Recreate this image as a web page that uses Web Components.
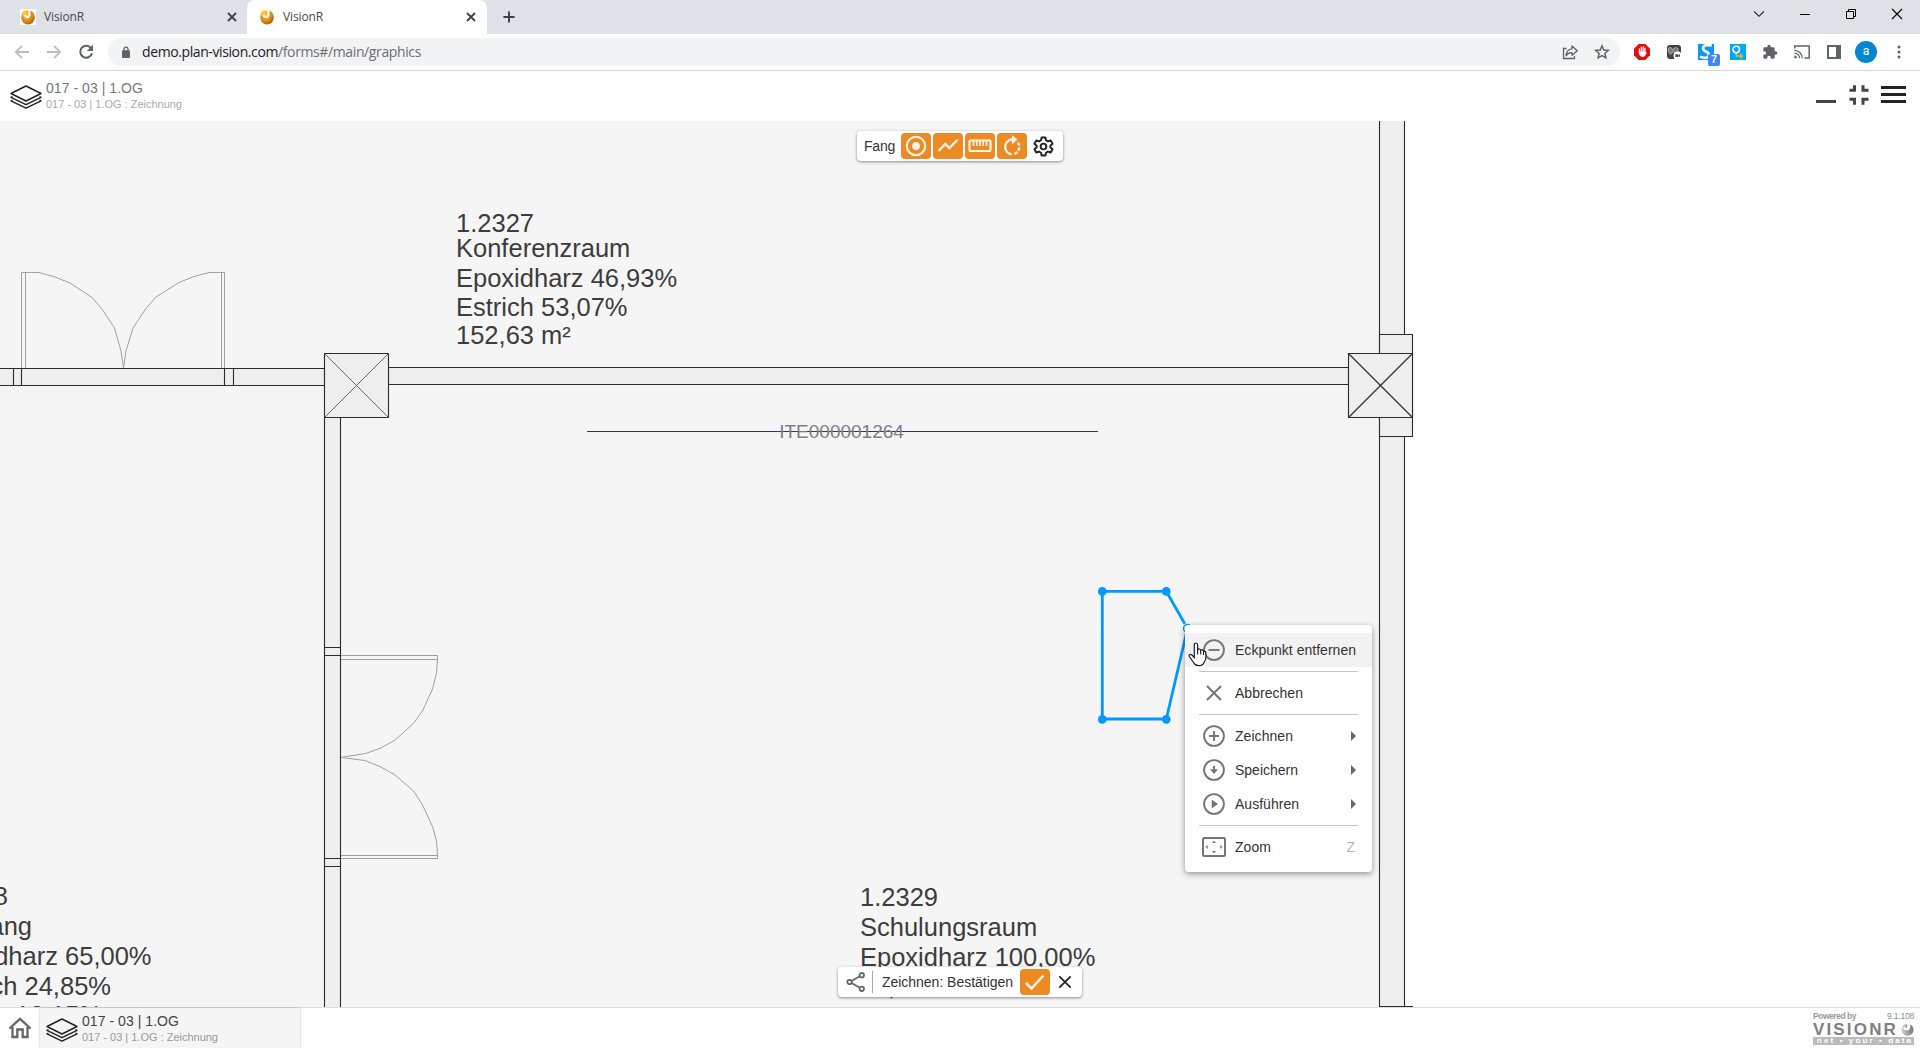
<!DOCTYPE html>
<html lang="de">
<head>
<meta charset="utf-8">
<title>VisionR</title>
<style>
html,body{margin:0;height:100%;overflow:hidden;background:#fff}
body{font-family:"Liberation Sans",Arial,sans-serif;font-size:14px}
</style>
</head>
<body>
<vr-window></vr-window>
<script>
const define = (name, html, init) => customElements.define(name, class extends HTMLElement {
  constructor() {
    super();
    this.attachShadow({ mode: 'open' }).innerHTML = html;
  }
  connectedCallback() { if (init) init.call(this, this.shadowRoot); }
});

/* A run of text spaced out to a fixed advance width. */
define('fit-text', '<style>:host{display:inline-block;white-space:nowrap;line-height:1;flex:none}</style><slot></slot>', function () {
  const want = +this.getAttribute('w'), n = this.textContent.length;
  this.style.letterSpacing = '0px';
  const have = this.getBoundingClientRect().width;
  if (want && have) this.style.letterSpacing = ((want - have) / n) + 'px';
});

const ICONS = {
  layers: ['0 0 32 24', '<g fill="none" stroke="#222" stroke-width="1.4" stroke-linejoin="round"><path d="M16 1 31 8.5 16 16 1 8.5Z"/><path d="M2.5 11.5 1 12.3 16 19.7 31 12.3 29.5 11.5"/><path d="M2.5 15 1 15.8 16 23.2 31 15.8 29.5 15"/></g>'],
  ball: ['0 0 16 16', '<defs><radialGradient id="g" cx=".4" cy=".4" r=".65"><stop offset="0" stop-color="#ffb52e"/><stop offset=".55" stop-color="#e08c1a"/><stop offset="1" stop-color="#a0600e"/></radialGradient></defs><circle cx="8" cy="8.600" r="6.800" fill="url(#g)"/><path d="M5.300 0H13V2.600L10.800 2Q11.600 9.300 7.400 9.300 4.200 9.200 2.800 5.600L5.300 4.800Q6.300 7.200 7.400 6.900 8.600 6.200 8 1.500Z" fill="#fff6e6"/><path d="M1.400 5.300Q2.800 1.500 7.300 1.300L7.500 5.600Q7.300 7.300 6.300 6.500L5.600 5.200 3.600 6Z" fill="#ffbf2f"/><path d="M10.300 1.700Q13 2.600 14.200 5L12.200 8Q10.500 6 10.300 1.700Z" fill="#dd8d20"/>'],
  close: ['0 0 16 16', '<path d="M4 4 12 12M12 4 4 12" stroke="#3c4043" stroke-width="1.8"/>'],
  plus: ['0 0 16 16', '<path d="M8 2.4V13.6M2.4 8H13.6" stroke="#3c4043" stroke-width="1.9"/>'],
  back: ['0 0 16 16', '<path d="M15 8H2.2M8 1.8 1.8 8 8 14.2" fill="none" stroke="#bbbdc0" stroke-width="1.8"/>'],
  fwd: ['0 0 16 16', '<path d="M1 8H13.8M8 1.8 14.2 8 8 14.2" fill="none" stroke="#bbbdc0" stroke-width="1.8"/>'],
  reload: ['0 0 16 16', '<path d="M13.3 4.4A6 6 0 1 0 14 9.4" fill="none" stroke="#5f6368" stroke-width="2"/><path d="M15 .8V7H8.8Z" fill="#5f6368"/>'],
  lock: ['0 0 8 11', '<path d="M2 5V3A2 2 0 0 1 6 3V5" fill="none" stroke="#5f6368" stroke-width="1.3"/><rect y="4" width="8" height="7" rx="1" fill="#5f6368"/>'],
  share: ['0 0 16 16', '<path d="M4.500 4.500H1.500V14.500H12.500V12" fill="none" stroke="#5f6368" stroke-width="1.3"/><path d="M10 2 15.3 6.7 10 11.3V8.7Q6 8.6 4 11.8 4.6 5.4 10 4.8Z" fill="none" stroke="#5f6368" stroke-width="1.3" stroke-linejoin="round"/>'],
  star: ['0 0 16 16', '<path d="M8 1.9 9.8 6 14.3 6.4 10.9 9.4 11.9 13.8 8 11.5 4.1 13.8 5.1 9.4 1.7 6.4 6.2 6Z" fill="none" stroke="#5f6368" stroke-width="1.5"/>'],
  block: ['0 0 16 16', '<path d="M4.7 0H11.3L16 4.7V11.3L11.3 16H4.7L0 11.3V4.7Z" fill="#e8090d"/><path d="M5.400 8.6V5M7.300 8V3.2M9.200 8V3M11 8.5V4.2" stroke="#fff" stroke-width="1.300" stroke-linecap="round"/><path d="M4.800 7.6H11.6V9Q12.700 7.400 12.800 8.200 11.500 13 8.6 13 4.800 12.800 4.800 7.6Z" fill="#fff"/>'],
  dark: ['0 0 16 16', '<rect x="1" y="1" width="14" height="14" rx="3" fill="#424242"/><path d="M2 5Q4 1.8 6.2 4.6V9Q4 12 2.8 8ZM7.4 5Q9.8 2.2 12 4.6V8.4Q9 11 7.4 8Z" fill="#777" stroke="#aaa"/><circle cx="11.6" cy="11.7" r="4.1" fill="#fff"/><path d="M9.2 10.2H12.2V11L14 10.2V13L12.2 12.3V13.1H9.2Z" fill="#555"/>'],
  simple: ['0 0 16 16', '<path d="M0 0H16V16H0Z" fill="#0a95ff"/><path d="M13.8 1.6Q5.2-.2 5 4.3 5.2 6.6 8.4 7.8 11.8 9.4 10.8 12.2 8.6 15.2 2 12.8" fill="none" stroke="#fff" stroke-width="2.600"/>'],
  finder: ['0 0 16 16', '<path d="M0 0H16V16H0Z" fill="#00a9fb"/><circle cx="6.3" cy="5.5" r="3.2" fill="none" stroke="#fff" stroke-width="1.5"/><path d="M6.3 9V11" stroke="#fff" stroke-width="1.3"/><path d="M6.6 9.400V12H12M10 9.7 12.500 12 10 14.500" stroke="#f3b51c" stroke-width="1.4" fill="none"/>'],
  puzzle: ['0 0 24 24', '<path fill="#5f6368" d="M20.5 11H19V7a2 2 0 0 0-2-2h-4V3.500a2.500 2.500 0 0 0-5 0V5H4a2 2 0 0 0-2 2v3.800h1.500a2.700 2.700 0 0 1 0 5.400H2V20a2 2 0 0 0 2 2h3.800v-1.500a2.700 2.700 0 0 1 5.400 0V22H17a2 2 0 0 0 2-2v-4h1.500a2.500 2.500 0 0 0 0-5z"/>'],
  cast: ['0 0 16 16', '<path d="M.8 4.500V2H15.200V14H10.500" fill="none" stroke="#5f6368" stroke-width="1.500"/><path d="M.5 6.300A8 8 0 0 1 8.300 14.300M.5 9.100A5.200 5.200 0 0 1 5.600 14.300" fill="none" stroke="#5f6368" stroke-width="1.300"/><path d="M.3 11.600A2.700 2.700 0 0 1 3 14.300H.3Z" fill="#5f6368"/>'],
  panel: ['0 0 14 14', '<path d="M0 0H14V14H0ZM2 2V12H9V2Z" fill="#5f6368" fill-rule="evenodd"/>'],
  dots: ['0 0 4 16', '<g fill="#5f6368"><circle cx="2" cy="3" r="1.500"/><circle cx="2" cy="8" r="1.500"/><circle cx="2" cy="13" r="1.500"/></g>'],
  chev: ['0 0 12 12', '<path d="M1.200 3.500 6 8.300 10.800 3.500" fill="none" stroke="#222" stroke-width="1.100"/>'],
  wmin: ['0 0 12 12', '<path d="M1 6.500H11" stroke="#000"/>'],
  wmax: ['0 0 12 12', '<path d="M1.500 3.500H8.500V10.500H1.500ZM3.500 3.500V1.500H10.500V8.500H8.500" fill="none" stroke="#000"/>'],
  wx: ['0 0 12 12', '<path d="M1 1 11 11M11 1 1 11" stroke="#000" stroke-width="1.100"/>'],
  amin: ['0 0 20 20', '<path d="M0 15H20V18H0Z" fill="#444"/>'],
  shrink: ['0 0 20 20', '<path d="M.5 5H5.500V0M14 0V5H19.500M.5 14H5.500V19.500M14 19.500V14H19.500" transform="translate(0 .3)" fill="none" stroke="#444" stroke-width="3"/>'],
  menu: ['0 0 25 18', '<path d="M0 0H25V3H0ZM0 7H25V10H0ZM0 14H25V17H0Z" fill="#222"/>'],
  target: ['0 0 22 22', '<circle cx="11" cy="11" r="9.200" fill="none" stroke="#fff3e2" stroke-width="2.200"/><circle cx="11" cy="11" r="3.900" fill="#fff3e2"/>'],
  trend: ['0 0 22 22', '<path d="M1.500 16 8.400 9 12.300 13 20.600 4.800" fill="none" stroke="#fff3e2" stroke-width="2.300"/>'],
  ruler: ['0 0 24 22', '<rect x="1.500" y="5.500" width="21" height="10.500" rx="1" fill="none" stroke="#fff3e2" stroke-width="2.200"/><path d="M5.500 6V11M8.800 6V11M12 6V11M15.200 6V11M18.500 6V11" stroke="#fff3e2" stroke-width="1.700"/>'],
  rotate: ['0 0 22 22', '<path d="M10.500 19.300A7.500 7.500 0 0 1 10.500 4.500H12" fill="none" stroke="#fff3e2" stroke-width="2.400"/><path d="M11 0 16.500 4.500 11 9.500Z" fill="#fff3e2"/><path d="M16.800 7.500A7.500 7.500 0 0 1 12.500 19.200" fill="none" stroke="#fff3e2" stroke-width="2.500" stroke-dasharray="3.400 1.600"/>'],
  gear: ['0 0 22 22', '<path d="M9 1.500H13L13.600 4.500 15.600 5.700 18.500 4.700 20.500 8.200 18.200 10.200V11.800L20.500 13.800 18.500 17.300 15.600 16.300 13.600 17.500 13 20.500H9L8.400 17.500 6.400 16.300 3.500 17.300 1.500 13.800 3.800 11.800V10.200L1.500 8.200 3.500 4.700 6.400 5.700 8.400 4.500Z" fill="none" stroke="#222" stroke-width="2" stroke-linejoin="round"/><circle cx="11" cy="11" r="3" fill="none" stroke="#222" stroke-width="2"/>'],
  minus: ['0 0 24 24', '<g fill="none" stroke="#757575" stroke-width="1.900"><circle cx="12" cy="12" r="9.900"/><path d="M6.500 12H17.500"/></g>'],
  cancel: ['0 0 24 24', '<path d="M5 5 19 19M19 5 5 19" stroke="#757575" stroke-width="2"/>'],
  add: ['0 0 24 24', '<g fill="none" stroke="#757575" stroke-width="1.900"><circle cx="12" cy="12" r="9.900"/><path d="M7 12H17M12 7V17"/></g>'],
  down: ['0 0 24 24', '<circle cx="12" cy="12" r="9.900" fill="none" stroke="#757575" stroke-width="1.900"/><path d="M11 7.800H13V11.300H16L12 16 8 11.300H11Z" fill="#757575"/>'],
  play: ['0 0 24 24', '<circle cx="12" cy="12" r="9.900" fill="none" stroke="#757575" stroke-width="1.900"/><path d="M9.700 7.500 16 12 9.700 16.500Z" fill="#757575"/>'],
  zoom: ['0 0 24 24', '<rect x="1" y="3.100" width="22" height="17.800" rx="1.200" fill="none" stroke="#757575" stroke-width="2"/><path d="M12 5.800 14 8H10ZM12 18.200 14 16H10ZM3.500 12 5.700 10V14ZM20.500 12 18.300 10V14Z" fill="#757575"/>'],
  tri: ['0 0 5 10', '<path d="M0 0 5 5 0 10Z" fill="#666"/>'],
  nodes: ['0 0 20 20', '<g fill="none" stroke="#666" stroke-width="1.800"><circle cx="3.500" cy="10" r="2.200"/><circle cx="15.800" cy="3.200" r="2.200"/><circle cx="15.800" cy="16.800" r="2.200"/><path d="M5.500 9 13.800 4.300M5.500 11 13.800 15.700"/></g>'],
  check: ['0 0 22 22', '<path d="M2 12 7.500 17.500 19.500 4.500" fill="none" stroke="#fff3e2" stroke-width="2.500"/>'],
  x: ['0 0 16 16', '<path d="M1.500 1.500 14.500 14.500M14.500 1.500 1.500 14.500" stroke="#222" stroke-width="2"/>'],
  home: ['0 0 24 22', '<path d="M1.500 11.500 12 1.800 22.500 11.500M4.500 10V20H9.300V12.500H14.700V20H19.500V10" fill="none" stroke="#666" stroke-width="2.300"/>'],
  hand: ['0 0 19 25', '<path d="M6.300 15.500V3Q6.300 1 8 1 9.600 1 9.600 3V8.200Q10.100 6.600 11.500 7 12.700 7.300 12.700 8.500 13.400 7.400 14.500 7.900 15.500 8.400 15.500 9.500 16.300 8.900 17.200 9.500 18 10.200 17.900 11.500V15Q17.900 18 16 20.500 14.800 23.700 10.600 23.700 7.300 23.700 5.500 20.500L1.300 14.500Q.6 13 2 12.500 3.500 12.100 6.300 15.500Z" fill="#fff" stroke="#1a1a2e" stroke-width="1.200"/><path d="M9.600 8V12.500M12.700 8.500V12.500M15.500 9.500V13" stroke="#1a1a2e" stroke-width="1.100"/>'],
  grayball: ['0 0 14 14', '<defs><linearGradient id="h"><stop offset="0" stop-color="#d0d0d0"/><stop offset="1" stop-color="#777"/></linearGradient></defs><circle cx="7" cy="7.200" r="6.500" fill="url(#h)"/><path d="M6.500 0H10Q10.500 8 6.500 8 3.300 8 1.800 4.800L4 4Q5.200 6 6.300 5.500 7.300 4.500 6.500 0Z" fill="#fff"/>']
};
define('vr-icon', '<style>:host{display:block;flex:none}svg{display:block;width:100%;height:100%;overflow:visible}</style><div></div>', function (r) {
  const [box, art] = ICONS[this.getAttribute('name')];
  const [w, h] = (this.getAttribute('size') || '16 16').split(' ');
  this.style.width = w + 'px';
  this.style.height = h + 'px';
  const d = r.querySelector('div');
  d.style.height = '100%';
  d.innerHTML = `<svg viewBox="${box}" preserveAspectRatio="none">${art}</svg>`;
});

define('browser-tab', `<style>
:host{display:flex;align-items:center;box-sizing:border-box;height:34px;width:247px;padding:0 7px 0 20px;font:12px "Open Sans","Noto Sans",sans-serif;color:#45494d}
:host([active]){width:240px;padding:0 8px 0 12px;background:#fff;border-radius:8px 8px 0 0}
.f{background:#fff;margin-right:8px}.t{flex:1;padding-bottom:1px}
</style><vr-icon class="f" name="ball"></vr-icon><div class="t"><fit-text w="40">VisionR</fit-text></div><vr-icon name="close" size="16 16"></vr-icon>`);

define('browser-strip', `<style>
:host{display:flex;align-items:center;height:34px;background:#dee1e6}
.p{margin-left:14px}.sp{flex:1}.w{display:flex;gap:34px;padding:0 17px 6px 0}
</style><browser-tab></browser-tab><browser-tab active></browser-tab><vr-icon class="p" name="plus"></vr-icon><div class="sp"></div>
<div class="w"><vr-icon name="chev" size="12 12"></vr-icon><vr-icon name="wmin" size="12 12"></vr-icon><vr-icon name="wmax" size="12 12"></vr-icon><vr-icon name="wx" size="12 12"></vr-icon></div>`);

define('address-bar', `<style>
:host{display:flex;align-items:center;height:36px;background:#fff;border-bottom:1px solid #d5d7da;box-sizing:content-box}
.nav{display:flex;gap:16px;width:94px;padding-left:14px}
.pill{display:flex;align-items:center;box-sizing:border-box;width:1512px;height:28px;border-radius:14px;background:#f1f3f4;padding:0 10px 0 14px;font:14px "Open Sans","Noto Sans",sans-serif;color:#202124}
.u{flex:1;display:flex;padding-left:12px}.g{color:#6b6f74}
.ic{display:flex;gap:16px}
.ext{display:flex;align-items:center;padding-left:14px;gap:16px}
.b{position:relative}.n{position:absolute;left:10px;top:10px;width:12px;height:12px;border-radius:2px;background:#4285f4;color:#fff;font:bold 10px/12px "Liberation Sans",sans-serif;text-align:center}
.av{width:22px;height:22px;border-radius:50%;background:#0288d1;color:#fff;font:12px/21px Roboto,sans-serif;text-align:center;margin:0 -3px}
.d{margin-left:7px}
</style><div class="nav"><vr-icon name="back"></vr-icon><vr-icon name="fwd"></vr-icon><vr-icon name="reload"></vr-icon></div>
<div class="pill"><vr-icon name="lock" size="8 12"></vr-icon><div class="u"><fit-text w="136">demo.plan-vision.com</fit-text><fit-text class="g" w="143">/forms#/main/graphics</fit-text></div><div class="ic"><vr-icon name="share"></vr-icon><vr-icon name="star"></vr-icon></div></div>
<div class="ext"><vr-icon name="block"></vr-icon><vr-icon name="dark"></vr-icon><div class="b"><vr-icon name="simple"></vr-icon><div class="n">7</div></div><vr-icon name="finder"></vr-icon><vr-icon name="puzzle"></vr-icon><vr-icon name="cast"></vr-icon><vr-icon name="panel" size="14 14" style="margin:0 1px"></vr-icon><div class="av">a</div><vr-icon class="d" name="dots" size="4 16"></vr-icon></div>`);

define('doc-label', `<style>
:host{display:flex;align-items:flex-start}
.l{display:flex;flex-direction:column;align-items:flex-start;gap:4px;padding-left:4px}.a{font-size:14px;color:var(--a,#777)}.s{font-size:11px;color:var(--s,#aaa)}vr-icon{margin-top:4px}
</style><vr-icon name="layers" size="32 24"></vr-icon><div class="l"><fit-text class="a" w="97">017 - 03 | 1.OG</fit-text><fit-text class="s" w="136">017 - 03 | 1.OG : Zeichnung</fit-text></div>`);

define('app-header', `<style>
:host{display:flex;justify-content:space-between;height:50px;background:#fff;box-sizing:border-box;padding:10px 14px 0 10px}
.r{display:flex;gap:13px;padding-top:4px}.m{margin:1px 0 0 -1px}
</style><doc-label></doc-label><div class="r"><vr-icon name="amin" size="20 20"></vr-icon><vr-icon name="shrink" size="20 20"></vr-icon><vr-icon class="m" name="menu" size="25 18"></vr-icon></div>`);

define('tool-button', `<style>:host{display:flex;align-items:center;justify-content:center;width:30px;height:26px;border-radius:4px;background:#ec8b24}</style><slot></slot>`);

define('snap-bar', `<style>
:host{display:flex;align-items:center;gap:2px;box-sizing:border-box;width:206px;height:30px;padding-left:7px;background:#fff;border-radius:4px;box-shadow:0 1px 3px rgba(0,0,0,.45);color:#333}
fit-text{margin-right:5px}.g{margin-left:4px}
</style><fit-text w="31">Fang</fit-text><tool-button style="margin-left:-1px"><vr-icon name="target" size="22 22"></vr-icon></tool-button><tool-button><vr-icon name="trend" size="22 22"></vr-icon></tool-button><tool-button><vr-icon name="ruler" size="24 22"></vr-icon></tool-button><tool-button><vr-icon name="rotate" size="22 22"></vr-icon></tool-button><vr-icon class="g" name="gear" size="21 21"></vr-icon>`);

define('confirm-bar', `<style>
:host{display:flex;align-items:center;box-sizing:border-box;width:244px;height:30px;padding-left:8px;background:#fff;border-radius:4px;box-shadow:0 1px 3px rgba(0,0,0,.45);color:#333}
.s{width:1px;height:22px;background:#aaa;margin:0 9px 0 6px}tool-button{margin:0 8px 0 7px}
</style><vr-icon name="nodes" size="20 20"></vr-icon><div class="s"></div><fit-text w="131">Zeichnen: Bestätigen</fit-text><tool-button><vr-icon name="check" size="22 22"></vr-icon></tool-button><vr-icon name="x" size="14 14"></vr-icon>`);

const menuItem = `<style>
:host{display:flex;align-items:center;height:34px;padding:0 16px 0 17px;color:#333}
:host([hover]){background:#f2f2f2}
.t{flex:1;padding-left:9px}
</style><div class="i"></div><div class="t"><slot></slot></div><slot name="end"></slot>`;
define('menu-item', menuItem, function (r) {
  r.querySelector('.i').innerHTML = `<vr-icon name="${this.getAttribute('icon')}" size="24 24"></vr-icon>`;
});
define('menu-rule', '<style>:host{display:block;height:1px;background:#c6c6c6;margin:4px 14px}</style>');
define('context-menu', `<style>
:host{display:block;box-sizing:border-box;width:187px;padding:8px 0;background:#fff;border-radius:4px;box-shadow:0 2px 6px rgba(0,0,0,.4)}
.k{color:#b5b5b5;margin-right:1px}
</style><menu-item icon="minus" hover><fit-text w="121">Eckpunkt entfernen</fit-text></menu-item><menu-rule></menu-rule>
<menu-item icon="cancel"><fit-text w="68">Abbrechen</fit-text></menu-item><menu-rule></menu-rule>
<menu-item icon="add"><fit-text w="58">Zeichnen</fit-text><vr-icon slot="end" name="tri" size="5 10"></vr-icon></menu-item>
<menu-item icon="down"><fit-text w="63">Speichern</fit-text><vr-icon slot="end" name="tri" size="5 10"></vr-icon></menu-item>
<menu-item icon="play"><fit-text w="64">Ausführen</fit-text><vr-icon slot="end" name="tri" size="5 10"></vr-icon></menu-item><menu-rule></menu-rule>
<menu-item icon="zoom"><fit-text w="36">Zoom</fit-text><span class="k" slot="end">Z</span></menu-item>`);

define('floor-plan', `<style>
:host{display:block;position:relative;height:886px;overflow:hidden;background:#fff}
svg{display:block}
.w{fill:#eee;stroke:#2b2b2b;stroke-width:1.1}.l{fill:none;stroke:#2b2b2b;stroke-width:1.1}.d{fill:none;stroke:#a0a0a0}
text{font-family:"Liberation Sans",Arial,sans-serif;font-size:25.500px;fill:#3c3c3c}
snap-bar,confirm-bar,context-menu,.hand{position:absolute}
snap-bar{left:857px;top:10px}confirm-bar{left:838px;top:846px}context-menu{left:1185px;top:504px}.hand{left:1188px;top:521px}
</style>
<svg width="1920" height="886" viewBox="0 121 1920 886">
<path d="M0 121H1405V1007H0Z" fill="#f5f5f5"/>
<path class="w" d="M1379.500 110V1006.500H1404.500V110Z"/><path class="l" d="M1404 1006.500H1413"/>
<path class="w" d="M1379.500 334.500H1412.500V436.500H1379.500Z"/>
<path class="w" d="M-5 368.500H324.500V385.500H-5Z"/>
<path class="w" d="M388.500 367.500H1348.500V384.500H388.500Z"/>
<path class="w" d="M324.500 417.500H340.500V1010H324.500Z"/>
<path class="l" d="M13.500 368.500V385.500M21.500 368.500V385.500M224.500 368.500V385.500M233.500 368.500V385.500M324.500 647.500H340.500M324.500 655.500H340.500M324.500 858.500H340.500M324.500 866.500H340.500"/>
<path class="w" d="M324.500 353.500H388.500V417.500H324.500Z"/><path d="M324.500 353.500 388.500 417.500M388.500 353.500 324.500 417.500" stroke="#666"/>
<path class="w" d="M1348.500 353.500H1412.500V417.500H1348.500Z"/><path d="M1348.500 353.500 1412.500 417.500M1412.500 353.500 1348.500 417.500" stroke="#333" stroke-width="1.300"/>
<path class="d" d="M21.500 368V272.500H39L55 277 70 283 92 297.500 102 309 114.500 328 121 351 123.500 368 126 351 133 328 145.500 309 156 297 179 282.500 194 276.500 209 272.500H224.500V368M25.500 272.500V368M221.500 272.500V368"/>
<path class="d" d="M341 655.500H437.500V659.500L436.500 673 432.500 689 423 710 413.500 723.500 395 740 381 748 365.500 753.500 341 757.500 365 760.500 381 767 395 775 413.500 791 422 804 432.500 826.500 436.500 841 437.500 855.500V858.500H341M341 659.500H437.500M341 855.500H437.500"/>
<text x="456" y="232">1.2327</text><text x="456" y="257">Konferenzraum</text><text x="456" y="287">Epoxidharz 46,93%</text><text x="456" y="316">Estrich 53,07%</text><text x="456" y="344">152,63 m²</text>
<text x="860" y="906">1.2329</text><text x="860" y="936">Schulungsraum</text><text x="860" y="966">Epoxidharz 100,00%</text><text x="888" y="994.500">,</text>
<g text-anchor="end"><text x="8" y="905">8</text><text x="32" y="935">ang</text><text x="151.500" y="965">dharz 65,00%</text><text x="111" y="995">ch 24,85%</text><text x="102" y="1024">12,15%</text></g>
<path d="M587 431.500H1098" stroke="#45286e"/><text x="779.200" y="437.700" style="font-size:19px;fill:#808080">ITE000001264</text>
<path d="M1187.500 628.500 1166.300 591.300H1102.300V719H1166.300Z" fill="none" stroke="#0099ff" stroke-width="2.800"/>
<g fill="#0099ff"><circle cx="1102.300" cy="591.400" r="4.300"/><circle cx="1166.300" cy="591.400" r="4.300"/><circle cx="1102.300" cy="719.400" r="4.300"/><circle cx="1166.300" cy="719.400" r="4.300"/></g>
<circle cx="1187.500" cy="628.500" r="5.500" fill="#fff"/><circle cx="1187.500" cy="628.500" r="4" fill="#fff" stroke="#0099ff" stroke-width="1.500"/>
</svg>
<snap-bar></snap-bar><confirm-bar></confirm-bar><context-menu></context-menu><vr-icon class="hand" name="hand" size="19 25"></vr-icon>`);

define('brand-mark', `<style>
:host{display:flex;flex-direction:column;width:101px;color:#8c8c8c}
.t{display:flex;justify-content:space-between;font-size:8.500px;height:11px;align-items:center}.b{font-weight:bold;color:#999}
.v{display:flex;justify-content:space-between;align-items:center;height:15px;color:#808080;font:bold 17px "Liberation Sans",sans-serif}
.s{height:8px;background:#bbb;color:#fff;font:bold 8px/7px "Liberation Sans",sans-serif;padding-left:4px;overflow:hidden}.s fit-text{line-height:7px;vertical-align:top}
</style><div class="t"><fit-text class="b" w="43">Powered by</fit-text><fit-text w="27">9.1.108</fit-text></div>
<div class="v"><fit-text w="85">VISIONR</fit-text><vr-icon name="grayball" size="13 13"></vr-icon></div>
<div class="s"><fit-text w="96">net • your • data</fit-text></div>`);

define('task-bar', `<style>
:host{display:flex;height:41px;box-sizing:border-box;border-top:1px solid #ddd;background:#fff}
.h{width:40px;display:flex;justify-content:center;padding-top:9px;box-sizing:border-box}
.t{width:260px;box-sizing:border-box;background:#f5f5f5;box-shadow:0 0 2px rgba(0,0,0,.3);padding:6px 0 0 6px;--a:#444;--s:#999}
.sp{flex:1}brand-mark{margin:3px 6px 0 0}
</style><div class="h"><vr-icon name="home" size="24 22"></vr-icon></div><div class="t"><doc-label></doc-label></div><div class="sp"></div><brand-mark></brand-mark>`);

define('vr-window', `<style>:host{display:flex;flex-direction:column;width:1920px;height:1048px;overflow:hidden}</style>
<browser-strip></browser-strip><address-bar></address-bar><app-header></app-header><floor-plan></floor-plan><task-bar></task-bar>`);
</script>
</body>
</html>
